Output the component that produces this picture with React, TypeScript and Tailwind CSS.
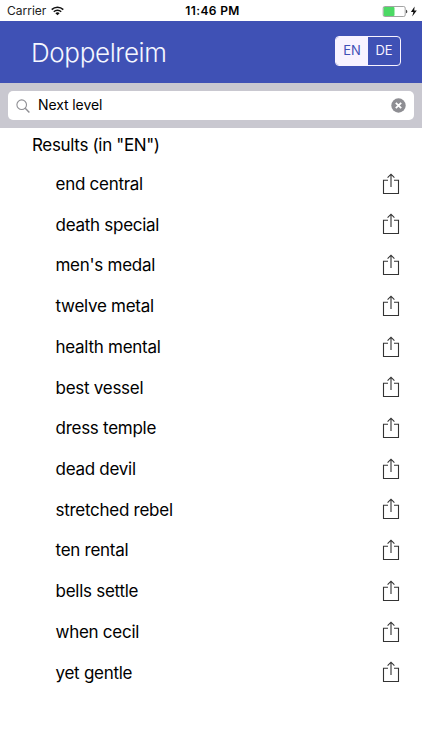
const results = [
  'end central', 'death special', "men's medal", 'twelve metal', 'health mental',
  'best vessel', 'dress temple', 'dead devil', 'stretched rebel', 'ten rental',
  'bells settle', 'when cecil', 'yet gentle',
];

function WifiIcon() {
  return (
    <svg className="ml-[5px] h-[10px] w-[13px]" viewBox="0 0 13 10" fill="none" stroke="#111" strokeWidth="1.5">
      <path d="M0.7 3.6a8.2 8.2 0 0 1 11.6 0" />
      <path d="M2.8 5.7a5.2 5.2 0 0 1 7.4 0" />
      <path d="M6.5 9.3L4.4 7.2a3 3 0 0 1 4.2 0z" fill="#111" stroke="none" />
    </svg>
  );
}

function Battery() {
  return (
    <svg className="h-[11px] w-[36px]" viewBox="0 0 36 11">
      <rect x="1.2" y="0.5" width="22" height="10" rx="1.5" fill="#fff" stroke="#8b8b8b" strokeWidth="0.8" />
      <rect x="1.7" y="1" width="10.8" height="9" rx="1" fill="#4cd964" />
      <path d="M24.2 3.7c1.4.3 1.4 3.3 0 3.6z" fill="#222" />
      <path d="M32.6 0.6L28.9 6h2.5l-1.2 4.4 4.6-5.8h-2.6z" fill="#111" />
    </svg>
  );
}

function ShareIcon() {
  return (
    <svg className="mb-px h-[22px] w-[18px]" viewBox="0 0 18 22" fill="none" stroke="#333" strokeWidth="1.1">
      <path d="M6 7.3H1.5v13.2h15V7.3H12" />
      <path d="M9 14V1.2M5.6 4.6L9 1.2l3.4 3.4" />
    </svg>
  );
}

export default function App() {
  return (
    <div className="flex h-[750px] w-[422px] flex-col overflow-hidden bg-white font-['Inter','Liberation_Sans',sans-serif] text-black">
      <div className="grid h-[21px] shrink-0 grid-cols-3 items-center pt-px pr-[4px] pl-[7px] text-[12px]">
        <div className="flex items-center text-[#222]">
          Carrier
          <WifiIcon />
        </div>
        <div className="text-center text-[12px] font-semibold tracking-[0.35px] whitespace-nowrap">11:46 PM</div>
        <div className="flex justify-end">
          <Battery />
        </div>
      </div>

      <header className="flex h-[62px] shrink-0 items-center justify-between bg-[#3f51b5] pr-[21px] pl-[31px]">
        <h1 className="text-[26px] font-light tracking-[-0.37px] text-[#f5f7ff]">Doppelreim</h1>
        <div className="mb-[2px] flex h-[30px] w-[66px] overflow-hidden rounded-[4px] border border-[#f8f3ff] text-[13px] tracking-[-0.1px]">
          <button className="flex-1 bg-[#f8f3ff] text-[#3f51b5]">EN</button>
          <button className="flex-1 text-[#f8f3ff]">DE</button>
        </div>
      </header>

      <div className="flex h-[45px] shrink-0 items-center bg-[#c9c8d0] px-[8px]">
        <div className="flex h-[29px] w-full items-center rounded-[5px] bg-white pr-[8px] pl-[8px]">
          <svg className="h-[14px] w-[14px]" viewBox="0 0 14 14" fill="none" stroke="#8e8e93" strokeWidth="1.1">
            <circle cx="5.7" cy="5.7" r="4.8" />
            <path d="M9.2 9.2l4.2 4.2" strokeWidth="1.4" />
          </svg>
          <span className="mb-[2px] ml-[8px] flex-1 text-[14px] tracking-[-0.1px]">Next level</span>
          <svg className="h-[15px] w-[15px]" viewBox="0 0 15 15">
            <circle cx="7.5" cy="7.5" r="7.2" fill="#8e8e93" />
            <path d="M4.8 4.8l5.4 5.4M10.2 4.8l-5.4 5.4" stroke="#fff" strokeWidth="1.8" />
          </svg>
        </div>
      </div>

      <main>
        <h2 className="flex h-[35px] items-center pl-[32px] text-[17px] tracking-[-0.33px]">Results (in "EN")</h2>
        <ul className="pt-[0.8px]">
          {results.map((r) => (
            <li key={r} className="flex h-[40.72px] items-center justify-between pr-[22px] pl-[55.5px] text-[17px] tracking-[-0.27px]">
              <span className="pt-[1.2px]">{r}</span>
              <ShareIcon />
            </li>
          ))}
        </ul>
      </main>
    </div>
  );
}
